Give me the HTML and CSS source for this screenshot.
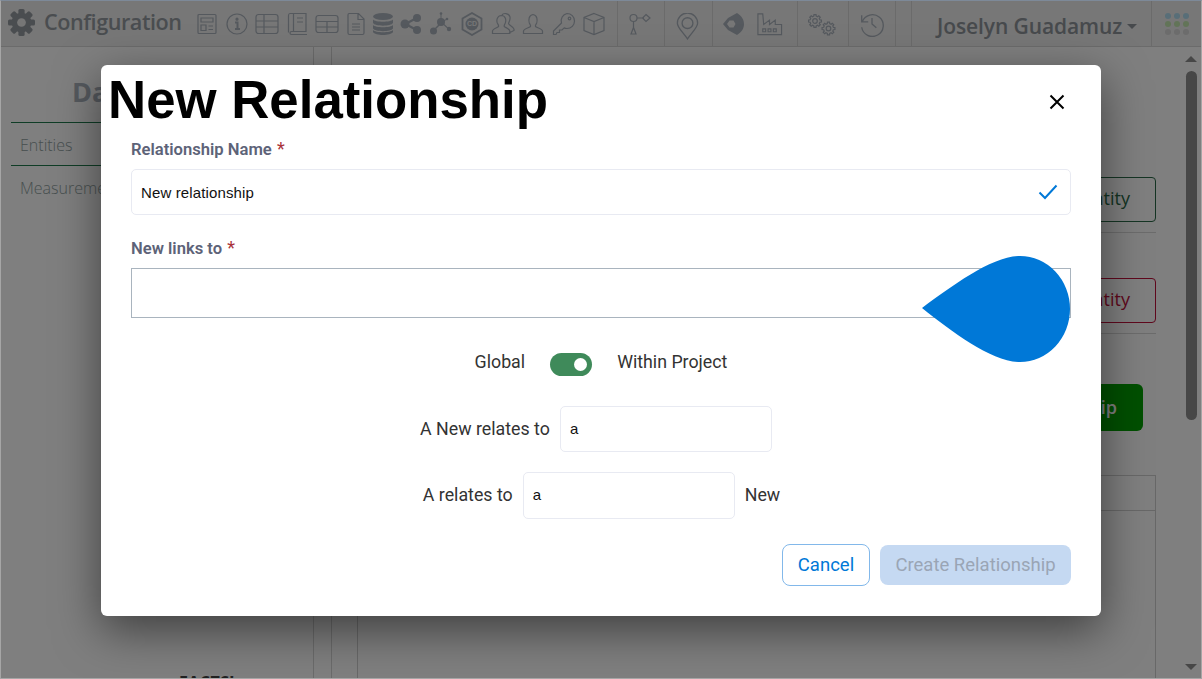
FILE: index.html
```html
<!DOCTYPE html>
<html lang="en">
<head>
<meta charset="utf-8">
<title>New Relationship</title>
<link rel="stylesheet" href="styles.css">
</head>
<body>
<div class="window">
  <header class="topbar">
    <div class="brand">
      <svg class="gear" viewBox="0 0 26 26"><g fill="currentColor"><rect x="10" y="0" width="6" height="26" rx="1.5"/><rect x="10" y="0" width="6" height="26" rx="1.5" transform="rotate(45 13 13)"/><rect x="10" y="0" width="6" height="26" rx="1.5" transform="rotate(90 13 13)"/><rect x="10" y="0" width="6" height="26" rx="1.5" transform="rotate(135 13 13)"/><circle cx="13" cy="13" r="9.5"/></g><circle cx="13" cy="13" r="4.2" fill="#ececec"/></svg>
      <span class="brand-name">Configuration</span>
    </div>
    <div class="tools">
      <span class="tool"><svg viewBox="0 0 24 24"><rect x="3" y="2.500" width="18" height="19" rx="1"/><path d="M6 6h12v4H6zM6 13h5v5.500H6zM13.500 14H18M13.500 17.500H18"/></svg></span>
      <span class="tool"><svg viewBox="0 0 24 24"><circle cx="12" cy="12" r="10"/><path d="M10 10.500h2.500V17M10 17h5" stroke-width="2"/><circle cx="12" cy="7.200" r="1" fill="currentColor"/></svg></span>
      <span class="tool"><svg viewBox="0 0 24 24"><rect x="1" y="2.500" width="22" height="19" rx="2.500"/><path d="M1 9h22M1 15h22M9 2.500v19"/></svg></span>
      <span class="tool"><svg viewBox="0 0 24 24"><path d="M5 1.500h16v18H6.500c-2 0-2 3 0 3H22M5 1.500c-1.200 0-1.500 1-1.500 2v17M8.500 1.500v18M12 6h6M12 10h6"/></svg></span>
      <span class="tool"><svg viewBox="0 0 24 24"><rect x="1" y="3.500" width="22" height="17" rx="2.500"/><path d="M1 9.500h22M12 9.500v11M1 15h22"/></svg></span>
      <span class="tool t28"><svg viewBox="0 0 24 24"><path d="M5 1.500h9.500L20 7v14a1.500 1.500 0 0 1-1.500 1.500h-13A1.500 1.500 0 0 1 4 21V3a1.500 1.500 0 0 1 1-1.500zM14 2v5.500h6M8 12h8M8 15h8M8 18h8"/></svg></span>
      <span class="tool t26"><svg viewBox="0 0 24 24" class="solid"><ellipse cx="12" cy="4.500" rx="10" ry="3.500"/><path d="M2 7.500c2 3 18 3 20 0V11c-2 3.500-18 3.500-20 0zM2 13c2 3 18 3 20 0v3.500c-2 3.500-18 3.500-20 0zM2 18c2 3 18 3 20 0v2c-2 4-18 4-20 0z"/></svg></span>
      <span class="tool"><svg viewBox="0 0 24 24" class="solid"><circle cx="6" cy="12" r="4.500"/><circle cx="18" cy="6" r="4"/><circle cx="18" cy="18" r="4"/><path d="M6 11l12-6.500 1 2-12 6.500zM7 11l12 6.500-1 2-12-6.500z"/></svg></span>
      <span class="tool"><svg viewBox="0 0 24 24" class="solid"><circle cx="12" cy="10" r="4"/><circle cx="4.500" cy="19" r="3.500"/><circle cx="20" cy="17" r="2.200"/><circle cx="12" cy="1.500" r="1.300"/><circle cx="18" cy="7" r="1.300"/><path d="M11.500 2h1v6h-1zM4 18l7-7 1 1-7 7zM13 10l7 6.500-.800.800-7-6.500zM13 9.500l5-3 .500.800-5 3z"/></svg></span>
      <span class="tool t32"><svg viewBox="0 0 24 24"><path d="M12 1l9.500 5.500v11L12 23l-9.500-5.500v-11z" stroke-width="1.800"/><circle cx="12" cy="12" r="6.500" fill="currentColor" stroke="none"/><text x="12" y="14.300" class="cd">CD</text></svg></span>
      <span class="tool"><svg viewBox="0 0 24 24"><path d="M1.500 21.500v-2.500c0-2 5-3.500 6-4.500.5-1-.5-2-1.200-3.500-.8-2-.8-7 4-7.500 4.500 0 5 5 4 7.500-.7 1.500-1.500 2.500-1 3.500 1 1 5.500 2.500 5.500 4.500v2.500zM11 3c1-2 7-2.500 8 2 .5 3-1 5-1.500 6.500 0 1.500 5 3 5.500 5.500v1.500L18 21"/></svg></span>
      <span class="tool"><svg viewBox="0 0 24 24"><path d="M2.500 21.500v-2.500c0-2 6-3.500 7-4.500.5-1-.5-2-1.200-3.500-.8-2.500-.8-8 3.700-8.500 4.500.5 4.500 6 3.700 8.500-.7 1.500-1.700 2.500-1.200 3.500 1 1 7 2.500 7 4.500v2.500z"/></svg></span>
      <span class="tool t32"><svg viewBox="0 0 24 24"><path d="M15 1.500a7.500 7.500 0 0 1 0 15c-1 0-2-.2-2.800-.6L10 18H7.500v2.500H5l-1 2H1.500v-3.500l8-8A7.500 7.500 0 0 1 15 1.500z"/><circle cx="17.500" cy="6.500" r="1.300"/></svg></span>
      <span class="tool t28"><svg viewBox="0 0 24 24"><path d="M12 1.500l10 4v13l-10 4-10-4v-13zM2 5.500l10 4 10-4M12 9.500v13"/></svg></span>
    </div>
    <span class="group g-flow"><svg viewBox="0 0 24 24"><circle cx="5.500" cy="6" r="3.500"/><path d="M9 6h7M18 2.500l4 3.500-4 3.500-3.500-3.500zM5.500 9.500v6M3 22l2.500-6.500L8 22z"/></svg></span>
    <span class="group g-pin"><svg viewBox="0 0 24 24"><path d="M12 23C8 17 3 13 3 9a9 9 0 0 1 18 0c0 4-5 8-9 14z"/><circle cx="12" cy="9" r="4.800"/></svg></span>
    <span class="group g-plant">
      <svg viewBox="0 0 24 24" class="solid"><path d="M2 12L7 6 16 1C21 4 23 8 23 12 23 16 21 20 16 23L7 18zM6 12l2.500 3.500h4l2-3.500-2-3.500h-4z" fill-rule="evenodd"/></svg>
      <svg viewBox="0 0 28 24" class="plant"><path d="M2 1.500h5l1 11 6-4.500v4.500l6-4.500v4.500h6.500v10.500H2zM7 17h3v3H7zM12.500 17h3v3h-3zM18 17h3v3h-3z"/></svg>
    </span>
    <span class="group g-gears"><svg viewBox="0 0 28 24"><defs><path id="cog" d="M4.850-1.210L6.420-1.020 6.420 1.020 4.850 1.210 4.290 2.580 5.260 3.820 3.820 5.260 2.580 4.290 1.210 4.850 1.020 6.420-1.020 6.420-1.210 4.850-2.580 4.290-3.820 5.260-5.260 3.820-4.290 2.580-4.850 1.210-6.420 1.020-6.420-1.020-4.850-1.210-4.290-2.580-5.260-3.820-3.820-5.260-2.580-4.290-1.210-4.850-1.020-6.420 1.020-6.420 1.210-4.850 2.580-4.290 3.820-5.260 5.260-3.820 4.290-2.580z"/></defs><use href="#cog" x="7" y="9"/><circle cx="7" cy="9" r="2.300"/><use href="#cog" x="20.500" y="16.500"/><circle cx="20.500" cy="16.500" r="2.300"/></svg></span>
    <span class="group g-history"><svg viewBox="0 0 24 24"><path d="M2.500 4v6h6M3 10a10 10 0 1 1-.5 5M12 6.500V12l4 3.500"/></svg></span>
    <span class="group g-blank"></span>
    <div class="user">
      <span class="user-name">Joselyn Guadamuz</span>
      <span class="caret"></span>
    </div>
    <div class="apps">
      <i class="dot a"></i><i class="dot a"></i><i class="dot a"></i>
      <i class="dot b"></i><i class="dot b"></i><i class="dot b"></i>
      <i class="dot c"></i><i class="dot c"></i><i class="dot c"></i>
    </div>
  </header>

  <div class="page">
    <aside class="side">
      <h2 class="side-title">Data Model</h2>
      <div class="side-item current">Entities</div>
      <div class="side-item">Measurements</div>
      <div class="side-foot">FACTS!</div>
    </aside>
    <div class="spacer"></div>
    <main class="main">
      <div class="action-row"><span class="ghost ghost-green">Add Entity</span></div>
      <div class="action-row"><span class="ghost ghost-red">Delete Entity</span></div>
      <div class="solid-row"><span class="solid-btn">Add Relationship</span></div>
      <div class="data-table"><div class="data-head"></div></div>
    </main>
    <div class="scrollbar">
      <span class="arrow up"></span>
      <span class="thumb"></span>
      <span class="arrow down"></span>
    </div>
  </div>

  <div class="overlay">
    <section class="modal">
      <div class="modal-head">
        <h1 class="modal-title">New Relationship</h1>
        <svg class="close" viewBox="0 0 16 16"><path d="M1.500 1.500l13 13M14.500 1.500l-13 13"/></svg>
      </div>
      <label class="field-label">Relationship Name <span class="req">*</span></label>
      <div class="input input-name">
        <span>New relationship</span>
        <svg class="check" viewBox="0 0 20 16"><path d="M1.500 8.500L7 14 18.500 1.500"/></svg>
      </div>
      <label class="field-label second">New links to <span class="req">*</span></label>
      <div class="input-links">
        <svg class="drop" viewBox="0 0 148 106"><path d="M0 52C30 30 70 0 98 0a50 53 0 0 1 0 106C70 106 30 76 0 52z"/></svg>
      </div>
      <div class="scope">
        <span class="lbl">Global</span>
        <span class="switch"><span class="knob"></span></span>
        <span class="lbl">Within Project</span>
      </div>
      <div class="relates rel-one">
        <span class="lbl">A New relates to</span>
        <span class="input small">a</span>
      </div>
      <div class="relates rel-two">
        <span class="lbl">A relates to</span>
        <span class="input small">a</span>
        <span class="lbl">New</span>
      </div>
      <div class="modal-foot">
        <button class="btn btn-cancel">Cancel</button>
        <button class="btn btn-create">Create Relationship</button>
      </div>
    </section>
  </div>
</div>
</body>
</html>
```

FILE: styles.css
```css
* { box-sizing: border-box; }
html, body { margin: 0; height: 100%; }
body { overflow: hidden; font-family: "Open Sans", sans-serif; background: #fff; }

.window {
  position: relative;
  width: 1202px;
  height: 679px;
  display: flex;
  flex-direction: column;
  overflow: hidden;
  border: 1px solid #a6a6a6;
  border-top-color: #7d8998;
  background: #fefefe;
}

/* top bar */
.topbar {
  flex: 0 0 46px;
  display: flex;
  align-items: stretch;
  background: #eeeeee;
  border-bottom: 1px solid #d6d6d6;
  color: #aab2bc;
}
.topbar svg { fill: none; stroke: currentColor; stroke-width: 1.2; }
.topbar svg.solid { fill: currentColor; stroke: none; }
.brand { display: flex; align-items: center; width: 191px; padding-left: 7px; color: #959ba1; }
.topbar svg.gear { width: 27px; height: 27px; margin-top: -2px; stroke: none; }
.brand-name { margin-left: 9px; padding-bottom: 4px; font-size: 21.600px; font-weight: 600; letter-spacing: -.45px; }
.tools { display: flex; align-items: center; width: 426px; border-right: 1px solid #d6d6d6; }
.tool { flex: 0 0 30px; display: flex; justify-content: center; align-items: center; }
.tool svg { width: 24px; height: 24px; }
.tool.t26 { flex-basis: 26px; }
.tool.t28 { flex-basis: 28px; }
.tool.t32 { flex-basis: 32px; }
.cd { font: 700 7px "Liberation Sans", sans-serif; text-anchor: middle; fill: #eeeeee; stroke: none; }

.group { display: flex; align-items: center; justify-content: center; border-right: 1px solid #d6d6d6; }
.group svg { width: 24px; height: 24px; }
.g-flow { width: 47px; padding-right: 2px; }
.g-pin { width: 48px; padding: 5px 3px 0 0; }
.g-pin svg { width: 27px; height: 27px; }
.g-plant { width: 85px; gap: 11px; padding-right: 6px; }
.group svg.plant { width: 27px; height: 24px; }
.g-gears { width: 51px; padding-right: 2px; }
.g-gears svg { width: 28px; height: 24px; }
.g-history { width: 47px; }
.g-history svg { width: 26px; height: 26px; }
.g-blank { width: 16px; }
.user { display: flex; align-items: center; width: 240px; padding-left: 25px; border-right: 1px solid #d6d6d6; color: #8e949a; }
.user-name { padding-top: 4px; font-size: 21px; font-weight: 600; letter-spacing: -.1px; }
.caret { margin-left: 5px; margin-top: 5px; border: 5px solid transparent; border-top-color: currentColor; border-bottom: 0; }
.apps { display: grid; grid-template-columns: repeat(3, 6px); gap: 2px 3px; align-content: center; padding-left: 13px; }
.dot { width: 6px; height: 6px; border-radius: 50%; }
.dot.a { background: #b0dcf0; }
.dot.b { background: #c4e8b0; }
.dot.c { background: #d8d8d8; }

/* page behind the dialog */
.page { flex: 1; min-height: 0; display: flex; }
.side { position: relative; flex: 0 0 313px; padding: 24px 0 0 10px; border-right: 1px solid #d6d6d6; }
.side-title { margin: 0 0 10px; padding-left: 61px; font-size: 27px; font-weight: 700; line-height: 41px; color: #aab2bc; }
.side-item { height: 44px; padding-left: 9px; font-size: 16px; font-weight: 300; line-height: 45px; color: #8f9e9e; }
.side-item.current { border-top: 1px solid #1e7a4c; border-bottom: 1px solid #1e7a4c; }
.side-foot { position: absolute; bottom: -15px; left: 178px; font-size: 16px; font-weight: 700; letter-spacing: .5px; color: #444; }
.spacer { flex: 0 0 18px; border-right: 1px solid #d6d6d6; }
.main { flex: 1; min-width: 0; padding: 130px 17px 0 25px; }
.action-row { height: 101px; display: flex; align-items: flex-start; justify-content: flex-end; background: linear-gradient(#d8d8d8, #d8d8d8) no-repeat 0 55px / 100% 1px; }
.ghost { height: 45px; padding: 0 25px; font-size: 18px; line-height: 41px; border-radius: 4px; border: 1px solid; }
.ghost-green { color: #2a6a48; border-color: #2a6a48; }
.ghost-red { color: #c0103a; border-color: #c0103a; }
.solid-row { display: flex; justify-content: flex-end; margin-top: 5px; padding-right: 13px; }
.solid-btn { height: 47px; padding: 0 26px; border-radius: 6px; font-size: 18px; font-weight: 600; line-height: 47px; color: #fff; background: #00a000; }
.data-table { height: 260px; margin-top: 44px; border: 1px solid #d0d0d0; border-bottom: 0; }
.data-head { height: 35px; border-bottom: 1px solid #d0d0d0; }
.scrollbar { position: relative; flex: 0 0 28px; display: flex; flex-direction: column; align-items: center; padding: 9px 0 8px 8px; }
.arrow { border: 6px solid transparent; }
.arrow.up { border-top: 0; border-bottom: 6px solid #8e8e8e; }
.arrow.down { border-bottom: 0; border-top: 6px solid #8e8e8e; }
.thumb { width: 11px; height: 349px; margin: 9px 0 auto; border-radius: 6px; background: #8e8e8e; }

/* dialog */
.overlay {
  position: absolute;
  inset: 0;
  display: flex;
  justify-content: center;
  align-items: center;
  padding-top: 2px;
  background: rgba(0, 0, 0, .5);
}
.modal {
  width: 1000px;
  height: 551px;
  padding: 0 30px;
  border-radius: 6px;
  background: #fff;
  box-shadow: 0 14px 46px rgba(0, 0, 0, .5);
  font-family: Roboto, sans-serif;
  color: #333;
}
.modal-head { height: 73px; margin-left: -23px; display: flex; justify-content: space-between; align-items: center; }
.modal-title { margin: -3px 0 0; font: 700 52.800px/70px "Liberation Sans", sans-serif; color: #000; }
.close { width: 16px; height: 16px; margin-right: 6px; fill: none; stroke: #000; stroke-width: 2; }
.field-label { display: block; height: 31px; padding-top: 2px; font-size: 16.600px; font-weight: 600; line-height: 20px; color: #5d6378; }
.field-label.second { margin-top: 22px; }
.req { margin-left: 1px; font-size: 18px; font-weight: 400; line-height: 16px; color: #a9333a; }
.input { display: flex; align-items: center; border: 1px solid #e8eaf2; border-radius: 5px; font: 15px "Liberation Sans", sans-serif; letter-spacing: .13px; color: #111; padding-left: 9px; }
.input-name { height: 46px; justify-content: space-between; padding-right: 12px; }
.check { width: 20px; height: 16px; fill: none; stroke: #0078d7; stroke-width: 2; }
.input-links { position: relative; height: 50px; border: 1px solid #a9b4be; }
.drop { position: absolute; top: -13px; right: 0; width: 148px; height: 106px; fill: #0078d7; }
.scope { display: flex; justify-content: center; align-items: center; gap: 25px; height: 24px; margin-top: 32px; font-size: 17.800px; }
.lbl { padding-bottom: 2px; }
.switch { position: relative; width: 42px; height: 23px; margin-top: 5px; border-radius: 12px; background: #3f8a5a; }
.knob { position: absolute; top: 5px; right: 5px; width: 13px; height: 13px; border-radius: 50%; background: #fff; }
.relates { display: flex; justify-content: center; align-items: center; gap: 10px; font-size: 17.800px; }
.rel-one { height: 46px; margin-top: 32px; padding-right: 10px; }
.rel-two { height: 47px; margin-top: 20px; padding-left: 1px; }
.input.small { width: 212px; height: 100%; padding-bottom: 2px; }
.modal-foot { display: flex; justify-content: flex-end; align-items: center; gap: 10px; height: 42px; margin-top: 25px; }
.btn { padding: 0 0 1px; font: 18.500px Roboto, sans-serif; border-radius: 8px; }
.btn-cancel { width: 88px; height: 42px; border: 1px solid #82b8ea; background: #fff; color: #0078d7; }
.btn-create { width: 191px; height: 40px; border: 0; background: #c5d9f2; color: #9aa5b5; }
```
